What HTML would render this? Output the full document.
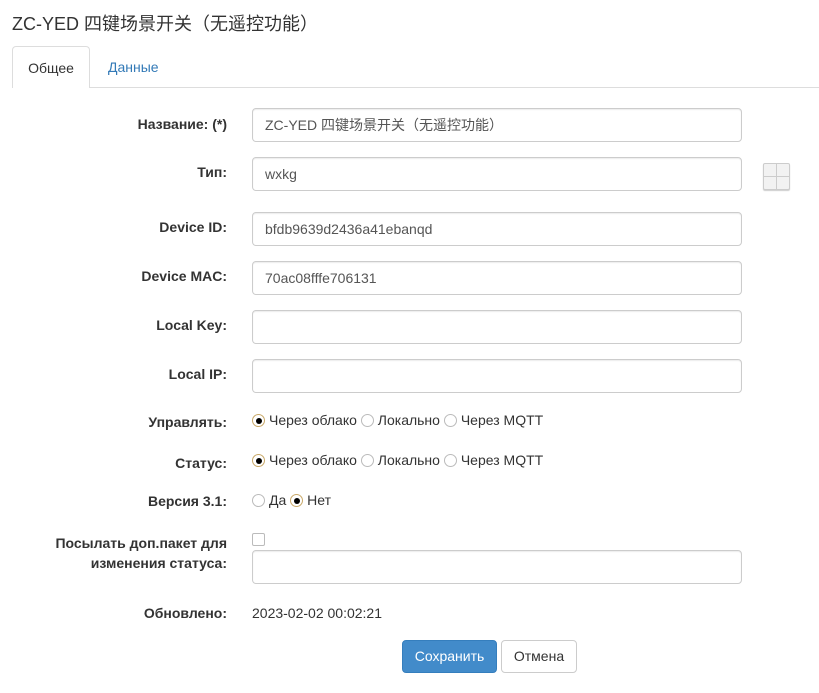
<!DOCTYPE html>
<html><head><meta charset="utf-8"><style>
*{box-sizing:border-box;margin:0;padding:0}
body{width:819px;height:693px;background:#fff;font-family:"Liberation Sans","Noto Sans CJK SC",sans-serif;font-size:14px;color:#333;position:relative;overflow:hidden}
.a{position:absolute;white-space:nowrap}
.lbl{position:absolute;right:592px;font-weight:bold;text-align:right;line-height:20px}
.inp{position:absolute;left:252px;width:490px;height:34px;border:1px solid #ccc;border-radius:4px;padding:0 12px;line-height:32px;color:#555;box-shadow:inset 0 1px 1px rgba(0,0,0,.075)}
.r{display:inline-block;width:13px;height:13px;border:1px solid #bbb;border-radius:50%;vertical-align:-2px;margin:0 4px 0 0;background:#fff;position:relative}
.r.on{border-color:#c9a96a;background:#fff}
.r.on::after{content:"";position:absolute;left:2.5px;top:2.5px;width:6px;height:6px;border-radius:50%;background:#000}
.rad{position:absolute;left:252px;line-height:20px}
</style></head><body>
<div class="a" style="left:12px;top:12px;font-size:18px;line-height:24px">ZC-YED 四键场景开关（无遥控功能）</div>
<div class="a" style="left:12px;top:87px;width:807px;height:1px;background:#ddd"></div>
<div class="a" style="left:12px;top:46px;width:78px;height:42px;border:1px solid #ddd;border-bottom:none;border-radius:4px 4px 0 0;background:#fff;text-align:center;line-height:42px">Общее</div>
<div class="a" style="left:108px;top:46px;line-height:42px;color:#337ab7">Данные</div>

<div class="lbl" style="top:114px">Название: (*)</div>
<div class="inp" style="top:108px">ZC-YED 四键场景开关（无遥控功能）</div>
<div class="lbl" style="top:162px">Тип:</div>
<div class="inp" style="top:157px">wxkg</div>
<div class="a" style="left:763px;top:163px;width:27px;height:27px;border:1px solid #ccc;border-radius:2px;background:#f2f2f2;box-shadow:0 1px 1px rgba(0,0,0,.2)">
 <div style="position:absolute;left:12px;top:0;width:1px;height:25px;background:#ccc"></div>
 <div style="position:absolute;top:12px;left:0;height:1px;width:25px;background:#ccc"></div></div>
<div class="lbl" style="top:217px">Device ID:</div>
<div class="inp" style="top:212px">bfdb9639d2436a41ebanqd</div>
<div class="lbl" style="top:266px">Device MAC:</div>
<div class="inp" style="top:261px">70ac08fffe706131</div>
<div class="lbl" style="top:315px">Local Key:</div>
<div class="inp" style="top:310px"></div>
<div class="lbl" style="top:364px">Local IP:</div>
<div class="inp" style="top:359px"></div>

<div class="lbl" style="top:412px">Управлять:</div>
<div class="rad" style="top:410px"><span class="r on"></span>Через облако <span class="r"></span>Локально <span class="r"></span>Через MQTT</div>
<div class="lbl" style="top:453px">Статус:</div>
<div class="rad" style="top:450px"><span class="r on"></span>Через облако <span class="r"></span>Локально <span class="r"></span>Через MQTT</div>
<div class="lbl" style="top:491px">Версия 3.1:</div>
<div class="rad" style="top:490px"><span class="r"></span>Да <span class="r on"></span>Нет</div>

<div class="lbl" style="top:533px">Посылать доп.пакет для<br>изменения статуса:</div>
<div class="a" style="left:252px;top:533px;width:13px;height:13px;border:1px solid #bbb;border-radius:2px"></div>
<div class="inp" style="top:550px"></div>

<div class="lbl" style="top:603px">Обновлено:</div>
<div class="a" style="left:252px;top:603px;line-height:20px">2023-02-02 00:02:21</div>

<div class="a" style="left:402px;top:640px;width:95px;height:33px;background:#428bca;border:1px solid #357ebd;border-radius:4px;color:#fff;text-align:center;line-height:31px">Сохранить</div>
<div class="a" style="left:501px;top:640px;width:76px;height:33px;background:#fff;border:1px solid #ccc;border-radius:4px;text-align:center;line-height:31px">Отмена</div>
</body></html>
